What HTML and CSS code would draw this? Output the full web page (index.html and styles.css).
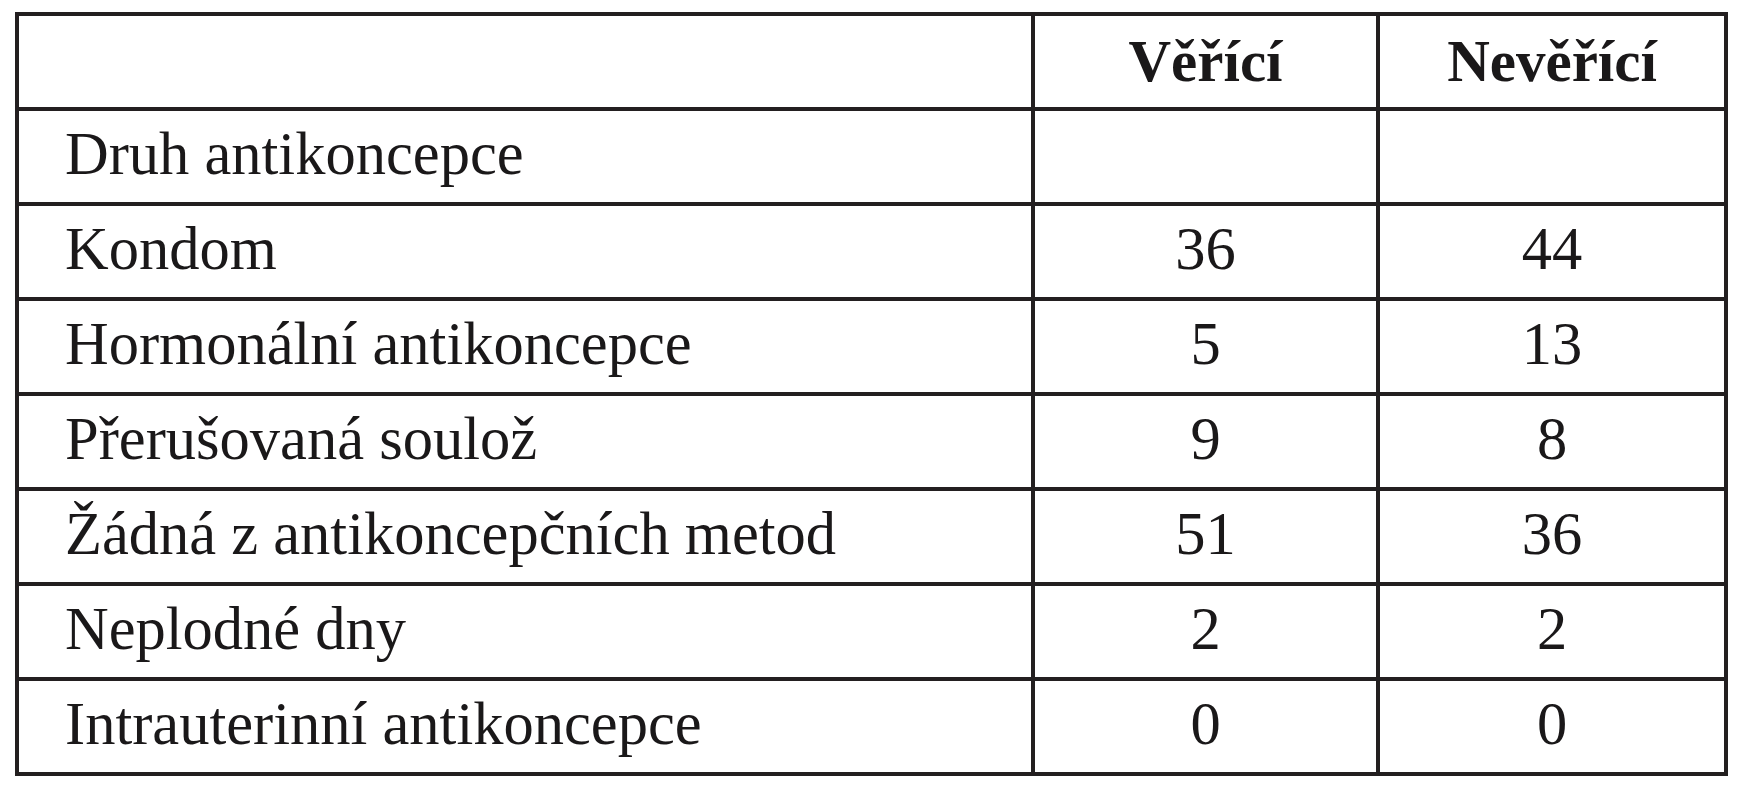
FILE: index.html
```html
<!DOCTYPE html>
<html lang="cs">
<head>
<meta charset="utf-8">
<title>Druh antikoncepce</title>
<link rel="stylesheet" href="styles.css">
</head>
<body>
<table class="data">
  <colgroup>
    <col class="c-label">
    <col class="c-num">
    <col class="c-num2">
  </colgroup>
  <thead>
    <tr>
      <th class="label"></th>
      <th class="num">Věřící</th>
      <th class="num">Nevěřící</th>
    </tr>
  </thead>
  <tbody>
    <tr><td class="label">Druh antikoncepce</td><td class="num"></td><td class="num"></td></tr>
    <tr><td class="label">Kondom</td><td class="num">36</td><td class="num">44</td></tr>
    <tr><td class="label">Hormonální antikoncepce</td><td class="num">5</td><td class="num">13</td></tr>
    <tr><td class="label">Přerušovaná soulož</td><td class="num">9</td><td class="num">8</td></tr>
    <tr><td class="label">Žádná z antikoncepčních metod</td><td class="num">51</td><td class="num">36</td></tr>
    <tr><td class="label">Neplodné dny</td><td class="num">2</td><td class="num">2</td></tr>
    <tr><td class="label">Intrauterinní antikoncepce</td><td class="num">0</td><td class="num">0</td></tr>
  </tbody>
</table>
</body>
</html>
```

FILE: styles.css
```css
html, body {
  margin: 0;
  padding: 0;
  background: #ffffff;
}

body {
  padding: 12px 0 0 15px;
  font-family: "Liberation Serif", "Times New Roman", serif;
  color: #1a1819;
}

.data {
  border-collapse: collapse;
  width: 1713px;
  table-layout: fixed;
  font-size: 60.5px;
}

.c-label { width: 1016px; }
.c-num { width: 345px; }
.c-num2 { width: 348px; }

.data th,
.data td {
  border: 4px solid #231f20;
  height: 87px;
  padding: 0 0 4px 0;
  vertical-align: middle;
  line-height: 1.1;
  white-space: nowrap;
}

.data th {
  font-weight: bold;
  font-size: 59px;
  height: 91px;
  padding-bottom: 0;
}

.data .label {
  text-align: left;
  padding-left: 46px;
}

.data .num {
  text-align: center;
}
```
